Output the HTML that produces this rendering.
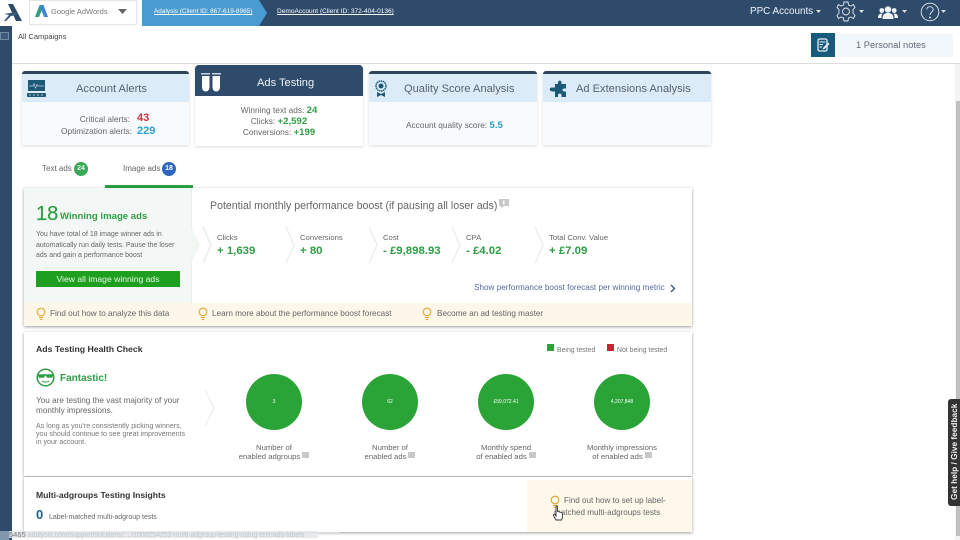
<!DOCTYPE html>
<html><head><meta charset="utf-8">
<style>
html,body{margin:0;padding:0;width:960px;height:540px;overflow:hidden;background:#fff}
body{font-family:"Liberation Sans",sans-serif;color:#666;position:relative;filter:blur(.3px)}
.a{position:absolute;white-space:nowrap}
.g{color:#2e9e45}
.card{position:absolute;top:71px;width:167px;height:74px;background:#f7fbfd;box-shadow:0 1px 3px rgba(0,0,0,.14);border-radius:4px 4px 0 0}
.card .top{position:absolute;left:0;right:0;top:0;height:3px;background:#2d4459;border-radius:4px 4px 0 0}
.card .hd{position:absolute;left:0;right:0;top:3px;height:28px;background:#dcebf8;font-size:11.100px;color:#59636d;line-height:30px}
.panel{position:absolute;left:24px;width:668px;background:#fff;box-shadow:0 1px 3px rgba(0,0,0,.38)}
.lbl{font-size:7.700px;color:#666}
.val{font-size:11.400px;font-weight:bold;color:#2e9e45}
.tip{font-size:8.170px;color:#666}
.flag{display:inline-block;width:7px;height:6px;background:#c8c8c8;vertical-align:1px;margin-left:2px}
.circ{position:absolute;top:374px;width:56px;height:56px;border-radius:50%;background:#2aa337;color:#fff;font-size:5px;line-height:56px;text-align:center}
.cap{position:absolute;top:443px;width:130px;text-align:center;font-size:7.700px;line-height:9px;color:#666}
</style></head><body>

<!-- Header -->
<div class="a" style="left:0;top:0;width:960px;height:26px;background:#2e4b6c"></div>
<div class="a" style="left:0;top:0;width:142px;height:26px;background:#fff"></div>
<svg class="a" style="left:3px;top:2px" width="20" height="20" viewBox="0 0 20 20"><path d="M5 2L10 2L19 19L13 19Z" fill="#2e4b6c"/><path d="M1 12L13 10L14 13L8 14L3 19L1 19L6 13Z" fill="#3a5878"/></svg>
<div class="a" style="left:29px;top:0;width:106px;height:23px;border:1px solid #e6e6e0;background:#fff"></div>
<svg class="a" style="left:35px;top:4px" width="13" height="14" viewBox="0 0 13 14"><path d="M4.500 1L8.500 1L13 13L9 13Z" fill="#3f83d6"/><path d="M4.500 1L7 6L4 13L0 13Z" fill="#2f9f8b"/></svg>
<div class="a" style="left:51px;top:6px;font-size:7.500px;line-height:12px;color:#777">Google AdWords</div>
<svg class="a" style="left:118px;top:9px" width="10" height="5"><path d="M0 0H9L4.500 5Z" fill="#666"/></svg>
<svg class="a" style="left:141px;top:0" width="127" height="26"><path d="M1 0H118L126 13L118 26H1Z" fill="#4a9bd2"/></svg>
<div class="a" style="left:154px;top:6px;font-size:6.450px;line-height:11px;color:#fff;text-decoration:underline">Adalysis (Client ID: 867-619-8965)</div>
<div class="a" style="left:277px;top:6px;font-size:6.550px;line-height:11px;color:#fff;text-decoration:underline">DemoAccount (Client ID: 372-404-0136)</div>
<div class="a" style="left:750px;top:5px;font-size:9.900px;line-height:13px;color:#eef2f6">PPC Accounts</div>
<svg class="a" style="left:816px;top:10px" width="5" height="3"><path d="M0 0H5L2.500 3Z" fill="#ddd"/></svg>
<svg class="a" style="left:836px;top:1px" width="20" height="21" viewBox="0 0 20 21" fill="none" stroke="#e6ebf0" stroke-width=".9"><path d="M8 1H12L12.500 4L15 5L17.500 3.500L19 6.500L17 8.500V12L19 14.500L17.500 17.500L15 16L12.500 17L12 20H8L7.500 17L5 16L2.500 17.500L1 14.500L3 12V8.500L1 6.500L2.500 3.500L5 5L7.500 4Z"/><circle cx="10" cy="10.500" r="3.500"/></svg>
<svg class="a" style="left:859px;top:10px" width="5" height="3"><path d="M0 0H5L2.500 3Z" fill="#ddd"/></svg>
<svg class="a" style="left:878px;top:6px" width="20" height="13" viewBox="0 0 20 13" fill="#f2f4f6"><circle cx="10" cy="3.500" r="3.200"/><path d="M4.500 13C4.500 8 7 7 10 7S15.500 8 15.500 13Z"/><circle cx="3.800" cy="4.500" r="2.400"/><circle cx="16.200" cy="4.500" r="2.400"/><path d="M0 12C0 8.500 1.500 7.500 3.800 7.500L4.500 8C3.500 9 3.500 10.500 3.500 12ZM20 12C20 8.500 18.500 7.500 16.200 7.500L15.500 8C16.500 9 16.500 10.500 16.500 12Z"/></svg>
<svg class="a" style="left:902px;top:10px" width="5" height="3"><path d="M0 0H5L2.500 3Z" fill="#ddd"/></svg>
<svg class="a" style="left:920px;top:2px" width="20" height="20" viewBox="0 0 20 20" fill="none" stroke="#e6ebf0" stroke-width=".9"><circle cx="10" cy="10" r="8.800"/><path d="M6.800 7.500C6.800 3.800 13.200 3.800 13.200 7.500C13.200 10 10 10 10 13"/><circle cx="10" cy="15.500" r=".5" fill="#e6ebf0"/></svg>
<svg class="a" style="left:941px;top:10px" width="5" height="3"><path d="M0 0H5L2.500 3Z" fill="#ddd"/></svg>

<!-- Sidebar -->
<div class="a" style="left:0;top:26px;width:12px;height:514px;background:#2e4b6c"></div>
<div class="a" style="left:0;top:32px;width:9px;height:8px;border:1px solid #6f8aa3;background:#3d5a7a;box-sizing:border-box"></div>

<!-- Subheader -->
<div class="a" style="left:18px;top:31px;font-size:7.500px;line-height:11px;color:#444">All Campaigns</div>
<div class="a" style="left:12px;top:63px;width:948px;height:1px;background:#dcdcdc"></div>
<div class="a" style="left:835px;top:34px;width:118px;height:23px;background:#f2f7fb"></div>
<div class="a" style="left:811px;top:33px;width:24px;height:24px;background:#165a7c"></div>
<svg class="a" style="left:816px;top:38px" width="15" height="15" viewBox="0 0 15 15"><rect x="2" y="1" width="9" height="12" rx="1.500" fill="none" stroke="#e8eef2" stroke-width="1.300"/><path d="M3.500 4H9.500M3.500 6.500H7M3.500 9H6" stroke="#e8eef2"/><path d="M7 10L12 4.500L13.500 6L8.500 11L6.500 11.500Z" fill="#e8eef2"/></svg>
<div class="a" style="left:856px;top:39px;font-size:9.300px;line-height:13px;color:#667">1 Personal notes</div>

<!-- Scrollbar -->
<div class="a" style="left:955px;top:64px;width:5px;height:476px;background:#f4f4f4"></div>
<div class="a" style="left:956px;top:101px;width:4px;height:435px;background:#c0c0c0"></div>

<!-- Cards -->
<div class="card" style="left:22px">
  <div class="top"></div><div class="hd" style="padding-left:54px">Account Alerts</div>
  <div class="a" style="right:59px;top:42px;font-size:8.300px;line-height:12px">Critical alerts:</div>
  <div class="a" style="left:115px;top:40px;font-size:11px;line-height:14px;font-weight:bold;color:#c0343a">43</div>
  <div class="a" style="left:39px;top:54px;font-size:8.300px;line-height:13px">Optimization alerts:</div>
  <div class="a" style="left:115px;top:53px;font-size:11px;line-height:14px;font-weight:bold;color:#2f9fd0">229</div>
</div>
<svg class="a" style="left:27px;top:80px" width="20" height="18" viewBox="0 0 20 18"><rect x="1" y="0" width="17" height="11" fill="#1d5874"/><path d="M2 6H6L7 3.500L8.500 8L10 4.500L11 6H17" stroke="#bcd" stroke-width=".7" fill="none"/><rect x="0" y="13" width="19" height="4" rx="1" fill="#1d5874"/><path d="M2 15H4M6 15H8M10 15H12M14 15H16" stroke="#bcd" stroke-width="1"/></svg>

<div class="a" style="left:195px;top:65px;width:168px;height:81px;background:#fff;box-shadow:0 1px 3px rgba(0,0,0,.14)"></div>
<div class="a" style="left:195px;top:65px;width:168px;height:31px;background:#2e4b6c;border-radius:4px 4px 0 0;color:#eef2f6;font-size:11.100px;line-height:36px;padding-left:62px;box-sizing:border-box">Ads Testing</div>
<svg class="a" style="left:201px;top:73px" width="21" height="19" viewBox="0 0 21 19" fill="#fff"><path d="M0 0H9V1.500H0ZM11 0H20V1.500H11Z" fill="#cdd6df"/><path d="M1 3H8.500V14C8.500 20 1 20 1 14ZM11.500 3H19V14C19 20 11.500 20 11.500 14Z"/></svg>
<div class="a" style="left:195px;top:105px;width:168px;text-align:center;font-size:8.300px;line-height:11px">Winning text ads: <b class="g" style="font-size:9.600px">24</b><br>Clicks: <b class="g" style="font-size:9.600px">+2,592</b><br>Conversions: <b class="g" style="font-size:9.600px">+199</b></div>

<div class="card" style="left:369px;width:168px">
  <div class="top"></div><div class="hd" style="padding-left:35px">Quality Score Analysis</div>
  <div class="a" style="left:37px;top:48px;font-size:8.300px;line-height:12px">Account quality score: <b style="font-size:9.600px;color:#2f9fbf">5.5</b></div>
</div>
<svg class="a" style="left:374px;top:80px" width="14" height="18" viewBox="0 0 14 18"><circle cx="7" cy="6" r="5" fill="none" stroke="#1d5874" stroke-width="1.500" stroke-dasharray="1.500 .6"/><circle cx="7" cy="6" r="2.500" fill="#1d5874"/><path d="M3 12L7 14L11 12V17L7 15L3 17Z" fill="#1d5874"/></svg>

<div class="card" style="left:543px;width:168px">
  <div class="top"></div><div class="hd" style="padding-left:33px">Ad Extensions Analysis</div>
</div>
<svg class="a" style="left:549px;top:80px" width="18" height="17" viewBox="0 0 18 17"><path d="M6 4H9V2.500C9 0 12.500 0 12.500 2.500V4H17V8.500H15C13 8.500 13 11.500 15 11.500H17V17H12.500V15C12.500 13 9 13 9 15V17H6V11.500H3C0 11 0 7.500 3 7.500H6Z" fill="#1a5a78"/></svg>

<!-- Tabs -->
<div class="a" style="left:42px;top:163px;font-size:8px;line-height:12px">Text ads</div>
<div class="a" style="left:74px;top:162px;width:14px;height:14px;border-radius:50%;background:#3aa856;color:#eaf6ec;font-size:7px;font-weight:bold;line-height:14px;text-align:center">24</div>
<div class="a" style="left:123px;top:163px;font-size:8px;line-height:12px">Image ads</div>
<div class="a" style="left:162px;top:162px;width:14px;height:14px;border-radius:50%;background:#2f66bd;color:#fff;font-size:7px;font-weight:bold;line-height:14px;text-align:center">18</div>
<div class="a" style="left:105px;top:185px;width:88px;height:3px;background:#2ea043"></div>

<!-- Panel 1 -->
<div class="panel" style="top:188px;height:138px"></div>
<div class="a" style="left:24px;top:188px;width:168px;height:115px;background:#f3f8f6;border-right:1px solid #e8eeea;box-sizing:border-box"></div>
<svg class="a" style="left:191px;top:225px" width="22" height="40" viewBox="0 0 22 40"><path d="M0 1L9 20L0 39Z" fill="#f1f6f3"/><path d="M12 2L20 20L12 38" fill="none" stroke="#f0f0f0" stroke-width="2"/></svg>
<div class="a g" style="left:36px;top:202px;font-size:20px;line-height:24px;-webkit-text-stroke:.2px #2e9e45">18</div>
<div class="a g" style="left:60px;top:210px;font-size:9.600px;line-height:14px;font-weight:bold">Winning image ads</div>
<div class="a" style="left:36px;top:230px;font-size:7px;line-height:10.500px;color:#666">You have total of 18 image winner ads in<br>automatically run daily tests. Pause the loser<br>ads and gain a performance boost</div>
<div class="a" style="left:36px;top:271px;width:144px;height:16px;background:#1f9f1f;color:#e6f6e6;font-size:8.600px;line-height:16px;text-align:center">View all image winning ads</div>
<div class="a" style="left:210px;top:199px;font-size:10.600px;line-height:14px;color:#666">Potential monthly performance boost (if pausing all loser ads)</div>
<svg class="a" style="left:499px;top:199px" width="11" height="9"><rect width="10" height="7" fill="#c8c8c8"/><path d="M2 7H5L2 9Z" fill="#c8c8c8"/><rect x="4" y="1.500" width="1.500" height="4" fill="#fff"/></svg>

<svg class="a" style="left:285px;top:226px" width="260" height="38" fill="none" stroke="#eee" stroke-width="1.500"><path d="M1 1L9 19L1 37M84 1L92 19L84 37M167 1L175 19L167 37M250 1L258 19L250 37"/></svg>
<div class="a lbl" style="left:217px;top:233px;line-height:10px">Clicks</div>
<div class="a val" style="left:217px;top:244px;line-height:14px">+ 1,639</div>
<div class="a lbl" style="left:300px;top:233px;line-height:10px">Conversions</div>
<div class="a val" style="left:300px;top:244px;line-height:14px">+ 80</div>
<div class="a lbl" style="left:383px;top:233px;line-height:10px">Cost</div>
<div class="a val" style="left:383px;top:244px;line-height:14px">- £9,898.93</div>
<div class="a lbl" style="left:466px;top:233px;line-height:10px">CPA</div>
<div class="a val" style="left:466px;top:244px;line-height:14px">- £4.02</div>
<div class="a lbl" style="left:549px;top:233px;line-height:10px">Total Conv. Value</div>
<div class="a val" style="left:549px;top:244px;line-height:14px">+ £7.09</div>
<div class="a" style="left:474px;top:282px;font-size:8.180px;line-height:12px;color:#5a6a9c">Show performance boost forecast per winning metric</div>
<svg class="a" style="left:670px;top:284px" width="6" height="9" fill="none" stroke="#45597d" stroke-width="1.400"><path d="M1 1L4.500 4.500L1 8"/></svg>
<div class="a" style="left:24px;top:303px;width:668px;height:23px;background:#fdf7e9"></div>
<svg class="a" style="left:36px;top:307px" width="10" height="14" fill="none" stroke="#e0a92c" stroke-width="1.100"><circle cx="5" cy="5" r="3.800"/><path d="M3 10.500H7M3.800 12.500H6.200"/></svg>
<div class="a tip" style="left:50px;top:308px;line-height:12px">Find out how to analyze this data</div>
<svg class="a" style="left:198px;top:307px" width="10" height="14" fill="none" stroke="#e0a92c" stroke-width="1.100"><circle cx="5" cy="5" r="3.800"/><path d="M3 10.500H7M3.800 12.500H6.200"/></svg>
<div class="a tip" style="left:212px;top:308px;line-height:12px">Learn more about the performance boost forecast</div>
<svg class="a" style="left:422px;top:307px" width="10" height="14" fill="none" stroke="#e0a92c" stroke-width="1.100"><circle cx="5" cy="5" r="3.800"/><path d="M3 10.500H7M3.800 12.500H6.200"/></svg>
<div class="a tip" style="left:437px;top:308px;line-height:12px">Become an ad testing master</div>

<!-- Panel 2 -->
<div class="panel" style="top:332px;height:144px"></div>
<div class="a" style="left:36px;top:343px;font-size:8.700px;line-height:13px;font-weight:bold;color:#333">Ads Testing Health Check</div>
<div class="a" style="left:547px;top:344px;width:7px;height:7px;background:#2aa337"></div>
<div class="a" style="left:557px;top:345px;font-size:6.900px;line-height:11px;color:#777">Being tested</div>
<div class="a" style="left:607px;top:344px;width:7px;height:7px;background:#cc2233"></div>
<div class="a" style="left:617px;top:345px;font-size:6.900px;line-height:11px;color:#777">Not being tested</div>
<svg class="a" style="left:36px;top:368px" width="19" height="19" viewBox="0 0 19 19" fill="none" stroke="#2e9e45" stroke-width="1.500"><circle cx="9.500" cy="9.500" r="8.300"/><path d="M2 6.500H17L16 9.500H11.500L10 7.500H9L7.500 9.500H3Z" fill="#2e9e45" stroke-width=".6"/><path d="M6 13C8 14.500 11 14.500 13 13" stroke-width="1"/></svg>
<div class="a" style="left:60px;top:372px;font-size:10px;line-height:14px;font-weight:bold;color:#2e9e45">Fantastic!</div>
<div class="a" style="left:36px;top:396px;font-size:8.200px;line-height:10px;color:#666">You are testing the vast majority of your<br>monthly impressions.</div>
<div class="a" style="left:36px;top:422px;font-size:7.100px;line-height:8px;color:#777">As long as you're consistently picking winners,<br>you should continue to see great improvements<br>in your account.</div>
<svg class="a" style="left:204px;top:389px" width="12" height="38" fill="none" stroke="#f0f0f0" stroke-width="1.500"><path d="M1 1L10 19L1 37"/></svg>
<div class="circ" style="left:246px">3</div>
<div class="circ" style="left:362px">62</div>
<div class="circ" style="left:478px">£59,072.41</div>
<div class="circ" style="left:594px">4,207,848</div>
<div class="cap" style="left:209px">Number of<br>enabled adgroups<span class="flag"></span></div>
<div class="cap" style="left:325px">Number of<br>enabled ads<span class="flag"></span></div>
<div class="cap" style="left:441px">Monthly spend<br>of enabled ads<span class="flag"></span></div>
<div class="cap" style="left:557px">Monthly impressions<br>of enabled ads<span class="flag"></span></div>

<!-- Panel 3 -->
<div class="panel" style="top:477px;height:55px"></div>
<div class="a" style="left:527px;top:480px;width:165px;height:52px;background:#fdf8ea"></div>
<div class="a" style="left:36px;top:489px;font-size:8.600px;line-height:13px;font-weight:bold;color:#333">Multi-adgroups Testing Insights</div>
<div class="a" style="left:36px;top:507px;font-size:13px;line-height:16px;font-weight:bold;color:#1b5f86">0</div>
<div class="a" style="left:49px;top:512px;font-size:7px;line-height:11px;color:#666">Label-matched multi-adgroup tests</div>
<svg class="a" style="left:550px;top:495px" width="10" height="14" fill="none" stroke="#d9a72c" stroke-width="1.100"><circle cx="5" cy="5" r="3.800"/><path d="M3 10.500H7M3.800 12.500H6.200"/></svg>
<div class="a" style="left:564px;top:495px;font-size:8.100px;line-height:11.700px;color:#666">Find out how to set up label-<br><span style="margin-left:-10px">matched multi-adgroups tests</span></div>
<svg class="a" style="left:552px;top:505px" width="12" height="16" viewBox="0 0 12 16"><path d="M4 1.500C4 .5 5.500 .5 5.500 1.500V6.500L9.500 7.500C10.500 8 10.500 9 10.500 10V12.500L9.500 15H4L1.500 10.500C1 9.500 2.500 9 3 9.500L4 11Z" fill="#fff" stroke="#333" stroke-width=".9"/></svg>

<!-- Status bar -->
<div class="a" style="left:0;top:531px;width:318px;height:7px;background:rgba(228,231,234,.85)"></div>
<div class="a" style="left:318px;top:532px;width:22px;height:1px;background:#ddd"></div>
<div class="a" style="left:0;top:531px;width:9px;height:9px;background:#8097ad"></div>
<div class="a" style="left:9px;top:530px;font-size:7.500px;line-height:9px;color:#777">5465 <span style="color:#c2c6ca;font-size:6.900px">adalysis.com/support/solutions/..../1000254252-multi-adgroup-testing-using-text-ads-labels</span></div>

<!-- Feedback -->
<div class="a" style="left:948px;top:399px;width:12px;height:107px;background:#333;border-radius:3px 0 0 3px"></div>
<div class="a" style="left:948px;top:399px;width:12px;height:105px;writing-mode:vertical-rl;transform:rotate(180deg);font-size:8.300px;line-height:12px;font-weight:bold;color:#f2f2f2;text-align:center">Get help / Give feedback</div>
</body></html>
